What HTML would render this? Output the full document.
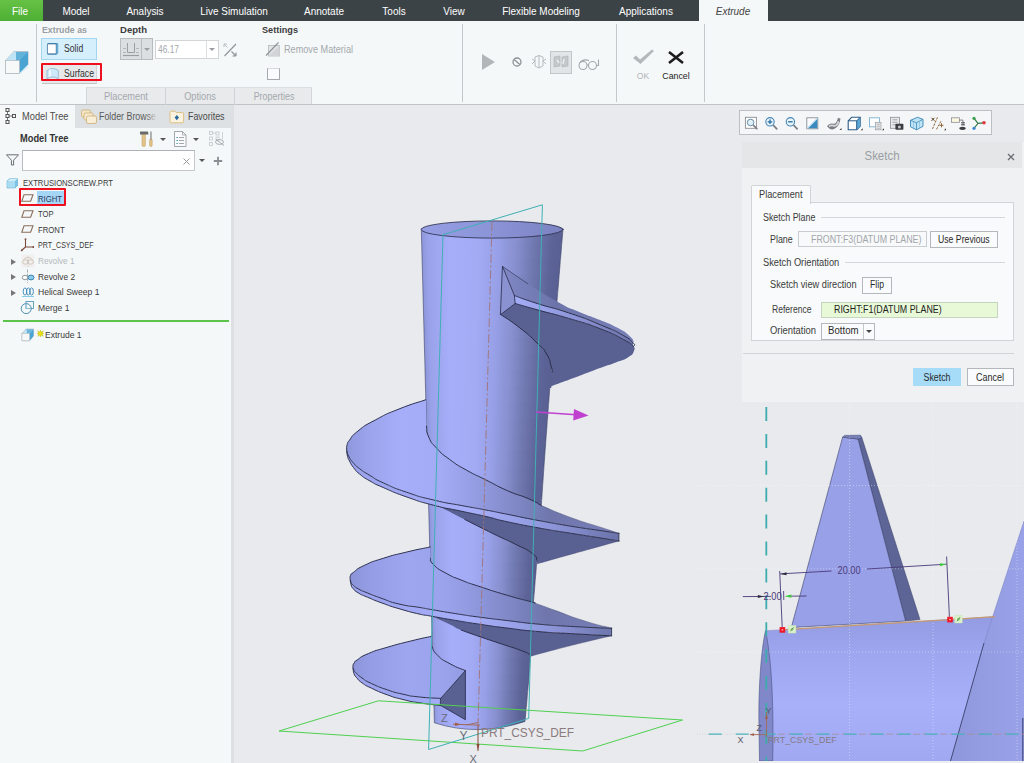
<!DOCTYPE html>
<html lang="en">
<head>
<meta charset="utf-8">
<title>Extrude - EXTRUSIONSCREW.PRT</title>
<style>
*{box-sizing:border-box;margin:0;padding:0}
html,body{width:1024px;height:763px;overflow:hidden;background:#e8eaee;font-family:"Liberation Sans",sans-serif;font-size:10px;color:#2b2b2b}
.abs{position:absolute}
#menubar{position:absolute;left:0;top:0;width:1024px;height:21px;background:#3c4346}
#menubar span{position:absolute;top:0;height:21px;line-height:22px;color:#fff;font-size:10.5px;white-space:nowrap;transform:translateX(-50%) scaleX(.95)}
#file{position:absolute;left:0;top:0;width:43px;height:21px;background:linear-gradient(#66c247,#4daf33);}
#extab{position:absolute;left:699px;top:0;width:69px;height:22px;background:#f5f8f9}
#ribbon{position:absolute;left:0;top:21px;width:1024px;height:84px;background:#f5f8f9;border-bottom:1px solid #c0c4c8}
.vsep{position:absolute;width:1px;background:#c4c8cb}
.lbl{position:absolute;white-space:nowrap;line-height:12px;transform:scaleX(.93);transform-origin:0 50%}
.lblc{position:absolute;white-space:nowrap;line-height:12px;transform:translateX(-50%) scaleX(.93)}
#below{display:none}
#left{position:absolute;left:0;top:105px;width:231px;height:658px;background:#fff}
#leftborder{position:absolute;left:231px;top:105px;width:2.7px;height:658px;background:#dce0e2}
#view{position:absolute;left:0;top:0;width:1024px;height:763px}
</style>
</head>
<body>
<!-- graphics area -->
<svg id="view" width="1024" height="763" viewBox="0 0 1024 763">
<defs>
  <linearGradient id="cyl" gradientUnits="userSpaceOnUse" x1="423" x2="560" y1="0" y2="0">
    <stop offset="0" stop-color="#8d95d8"/>
    <stop offset="0.06" stop-color="#99a1e8"/>
    <stop offset="0.22" stop-color="#a6aef9"/>
    <stop offset="0.42" stop-color="#a3abf5"/>
    <stop offset="0.60" stop-color="#949ce2"/>
    <stop offset="0.76" stop-color="#7a82bd"/>
    <stop offset="0.86" stop-color="#646c9f"/>
    <stop offset="1" stop-color="#596092"/>
  </linearGradient>
  <linearGradient id="cylb" x1="0" x2="1" y1="0" y2="0">
    <stop offset="0" stop-color="#8d95d8"/>
    <stop offset="0.05" stop-color="#9aa2ea"/>
    <stop offset="0.2" stop-color="#a6aefa"/>
    <stop offset="0.4" stop-color="#a3abf5"/>
    <stop offset="0.55" stop-color="#979fe6"/>
    <stop offset="0.67" stop-color="#8890d0"/>
    <stop offset="0.80" stop-color="#7078b0"/>
    <stop offset="0.92" stop-color="#5c6498"/>
    <stop offset="1" stop-color="#596092"/>
  </linearGradient>
  <linearGradient id="cap" gradientUnits="userSpaceOnUse" x1="421" x2="563" y1="0" y2="0">
    <stop offset="0" stop-color="#969ee4"/>
    <stop offset="0.5" stop-color="#8c94d8"/>
    <stop offset="1" stop-color="#7a82c0"/>
  </linearGradient>
  <linearGradient id="ftop" gradientUnits="userSpaceOnUse" x1="346" x2="620" y1="0" y2="0">
    <stop offset="0" stop-color="#8f97dc"/>
    <stop offset="0.08" stop-color="#9ba3ec"/>
    <stop offset="0.2" stop-color="#a6aefa"/>
    <stop offset="0.35" stop-color="#a3abf5"/>
    <stop offset="0.5" stop-color="#9199de"/>
    <stop offset="0.62" stop-color="#8088c6"/>
    <stop offset="0.75" stop-color="#6e76ac"/>
    <stop offset="1" stop-color="#7880b8"/>
  </linearGradient>
  <linearGradient id="ftop2" gradientUnits="userSpaceOnUse" x1="350" x2="612" y1="0" y2="0">
    <stop offset="0" stop-color="#8b93d8"/>
    <stop offset="0.08" stop-color="#959de6"/>
    <stop offset="0.22" stop-color="#9ea6f0"/>
    <stop offset="0.36" stop-color="#9ba3ec"/>
    <stop offset="0.5" stop-color="#8d95da"/>
    <stop offset="0.62" stop-color="#7e86c4"/>
    <stop offset="0.75" stop-color="#6e76ac"/>
    <stop offset="1" stop-color="#7880b8"/>
  </linearGradient>
  <linearGradient id="fedge" gradientUnits="userSpaceOnUse" x1="346" x2="620" y1="0" y2="0">
    <stop offset="0" stop-color="#9aa2ec"/>
    <stop offset="0.45" stop-color="#a7affa"/>
    <stop offset="0.75" stop-color="#8e96da"/>
    <stop offset="1" stop-color="#6a72a8"/>
  </linearGradient>
  <linearGradient id="f1top" gradientUnits="userSpaceOnUse" x1="502" x2="634" y1="0" y2="0">
    <stop offset="0" stop-color="#8088c6"/>
    <stop offset="0.4" stop-color="#6c74aa"/>
    <stop offset="1" stop-color="#7880b8"/>
  </linearGradient>
  <linearGradient id="f1edge" gradientUnits="userSpaceOnUse" x1="514" x2="634" y1="0" y2="0">
    <stop offset="0" stop-color="#a4acf6"/>
    <stop offset="0.5" stop-color="#8e96da"/>
    <stop offset="1" stop-color="#6a72a8"/>
  </linearGradient>
</defs>
<rect x="0" y="0" width="1024" height="763" fill="#e8eaee"/>

<g id="screw" stroke-linejoin="round" stroke-linecap="round">
<clipPath id="cylclip"><path d="M421.3,229 L434.4,722.8 Q478,737 525,721.5 L528.7,680 L530.3,656 L533.4,602.5 L536.6,564 L541.3,505.6 L544.4,460 L550,385 L563,229 Z"/></clipPath>
<g clip-path="url(#cylclip)">
<rect x="420.9" y="226.0" width="142.2" height="16.6" fill="url(#cylb)"/>
<rect x="421.4" y="242.0" width="140.4" height="16.6" fill="url(#cylb)"/>
<rect x="421.8" y="258.0" width="138.6" height="16.6" fill="url(#cylb)"/>
<rect x="422.2" y="274.0" width="136.9" height="16.6" fill="url(#cylb)"/>
<rect x="422.6" y="290.0" width="135.1" height="16.6" fill="url(#cylb)"/>
<rect x="423.1" y="306.0" width="133.4" height="16.6" fill="url(#cylb)"/>
<rect x="423.5" y="322.0" width="131.6" height="16.6" fill="url(#cylb)"/>
<rect x="423.9" y="338.0" width="129.8" height="16.6" fill="url(#cylb)"/>
<rect x="424.3" y="354.0" width="128.1" height="16.6" fill="url(#cylb)"/>
<rect x="424.8" y="370.0" width="126.3" height="16.6" fill="url(#cylb)"/>
<rect x="425.2" y="386.0" width="124.7" height="16.6" fill="url(#cylb)"/>
<rect x="425.6" y="402.0" width="123.0" height="16.6" fill="url(#cylb)"/>
<rect x="426.0" y="418.0" width="121.4" height="16.6" fill="url(#cylb)"/>
<rect x="426.5" y="434.0" width="119.8" height="16.6" fill="url(#cylb)"/>
<rect x="426.9" y="450.0" width="118.2" height="16.6" fill="url(#cylb)"/>
<rect x="427.3" y="466.0" width="116.6" height="16.6" fill="url(#cylb)"/>
<rect x="427.7" y="482.0" width="115.1" height="16.6" fill="url(#cylb)"/>
<rect x="428.1" y="498.0" width="113.6" height="16.6" fill="url(#cylb)"/>
<rect x="428.6" y="514.0" width="111.9" height="16.6" fill="url(#cylb)"/>
<rect x="429.0" y="530.0" width="110.2" height="16.6" fill="url(#cylb)"/>
<rect x="429.4" y="546.0" width="108.5" height="16.6" fill="url(#cylb)"/>
<rect x="429.8" y="562.0" width="106.8" height="16.6" fill="url(#cylb)"/>
<rect x="430.3" y="578.0" width="105.0" height="16.6" fill="url(#cylb)"/>
<rect x="430.7" y="594.0" width="103.2" height="16.6" fill="url(#cylb)"/>
<rect x="431.1" y="610.0" width="101.9" height="16.6" fill="url(#cylb)"/>
<rect x="431.5" y="626.0" width="100.5" height="16.6" fill="url(#cylb)"/>
<rect x="432.0" y="642.0" width="99.2" height="16.6" fill="url(#cylb)"/>
<rect x="432.4" y="658.0" width="97.7" height="16.6" fill="url(#cylb)"/>
<rect x="432.8" y="674.0" width="96.2" height="16.6" fill="url(#cylb)"/>
<rect x="433.2" y="690.0" width="94.4" height="16.6" fill="url(#cylb)"/>
<rect x="433.7" y="706.0" width="92.5" height="16.6" fill="url(#cylb)"/>
<rect x="434.1" y="722.0" width="90.9" height="16.6" fill="url(#cylb)"/>
</g>
<path d="M421.3,229 L434.4,722.8 Q478,737 525,721.5 L528.7,680 L530.3,656 L533.4,602.5 L536.6,564 L541.3,505.6 L544.4,460 L550,385 L563,229 Z" fill="none" stroke="#3a4068" stroke-width="0.6"/>
<ellipse cx="492.2" cy="229.5" rx="70.9" ry="8.6" fill="url(#cap)" stroke="#262a44" stroke-width="0.8"/>
<path d="M515.2,303.5 C522.5,305.6 519.4,304.8 537.2,309.8 C555.0,314.8 547.7,312.1 568.7,318.4 C589.7,324.7 581.8,321.6 600.1,328.7 C618.4,335.8 612.6,333.8 623.7,339.7 C634.8,345.6 630.2,344.1 633.5,346.3 L633.5,346.3 C633.7,347.8 635.7,347.1 634.0,350.7 C632.3,354.3 634.5,353.1 628.5,357.0 C622.5,360.9 625.4,358.8 615.9,362.5 C606.4,366.2 613.7,363.0 600.1,368.0 C586.5,373.0 591.7,371.3 575.0,377.5 C558.3,383.7 558.3,383.6 550.0,386.7 L552.5,372.0 C552.0,370.0 553.0,372.0 551.0,366.0 C549.0,360.0 551.3,361.7 546.6,354.0 C541.9,346.3 545.9,351.7 537.0,343.0 C528.1,334.3 532.1,337.5 520.0,328.0 C507.9,318.5 507.1,319.0 500.7,314.5 Z" fill="#596092" stroke="none"/>
<path d="M548.5,369 L553,371 L551.2,388 L548.5,388 Z" fill="#596092"/>
<path d="M502.6,266.5 C511.0,272.3 508.9,271.7 527.8,283.8 C546.7,295.9 542.4,293.5 559.2,302.7 C576.0,311.9 564.5,305.6 578.1,311.4 C591.7,317.2 587.5,314.8 600.1,320.0 C612.7,325.2 606.4,322.1 615.9,327.1 C625.4,332.1 622.5,330.0 628.5,335.0 C634.5,340.0 632.2,339.7 634.0,342.0 L632.4,342.8 C629.5,340.4 634.5,341.7 623.7,335.7 C612.9,329.7 618.4,332.3 600.1,324.7 C581.8,317.1 589.7,320.0 568.7,312.9 C547.7,305.8 555.3,309.3 537.2,303.5 C519.1,297.7 522.0,298.2 514.4,295.6 Z" fill="url(#f1top)" stroke="none"/>
<path d="M514.4,295.6 C522.0,298.2 519.1,297.7 537.2,303.5 C555.3,309.3 547.7,305.8 568.7,312.9 C589.7,320.0 581.8,317.1 600.1,324.7 C618.4,332.3 612.9,329.7 623.7,335.7 C634.5,341.7 629.5,340.4 632.4,342.8 L633.5,346.3 C630.2,344.1 634.8,345.6 623.7,339.7 C612.6,333.8 618.4,335.8 600.1,328.7 C581.8,321.6 589.7,324.7 568.7,318.4 C547.7,312.1 555.0,314.8 537.2,309.8 C519.4,304.8 522.5,305.6 515.2,303.5 Z" fill="url(#f1edge)" stroke="none"/>
<path d="M502.6,266.5 L514.4,295.6 L515.2,303.5 L500.7,314.5 Z" fill="#8a92d2" stroke="#262a44" stroke-width="0.8"/>
<path d="M514.4,295.6 C522.0,298.2 519.1,297.7 537.2,303.5 C555.3,309.3 547.7,305.8 568.7,312.9 C589.7,320.0 581.8,317.1 600.1,324.7 C618.4,332.3 612.9,329.7 623.7,335.7 C634.5,341.7 629.5,340.4 632.4,342.8" fill="none" stroke="#262a44" stroke-width="0.95"/>
<path d="M515.2,303.5 C522.5,305.6 519.4,304.8 537.2,309.8 C555.0,314.8 547.7,312.1 568.7,318.4 C589.7,324.7 581.8,321.6 600.1,328.7 C618.4,335.8 612.6,333.8 623.7,339.7 C634.8,345.6 630.2,344.1 633.5,346.3" fill="none" stroke="#262a44" stroke-width="0.95"/>
<path d="M500.7,314.5 C507.1,319.0 507.9,318.5 520.0,328.0 C532.1,337.5 528.1,334.3 537.0,343.0 C545.9,351.7 541.9,346.3 546.6,354.0 C551.3,361.7 549.0,360.0 551.0,366.0 C553.0,372.0 552.0,370.0 552.5,372.0" fill="none" stroke="#262a44" stroke-width="0.95"/>
<path d="M632.4,342.8 C633.1,343.4 634.2,343.3 634.6,344.5 C635.0,345.7 633.9,345.7 633.5,346.3" fill="none" stroke="#262a44" stroke-width="0.95"/>
<path d="M502.6,266.5 C511.0,272.3 519.4,278.0 527.8,283.8" fill="none" stroke="#262a44" stroke-width="0.6"/>
<path d="M437.7,505.8 C445.8,507.6 445.8,507.7 461.9,511.3 C478.0,514.9 470.8,513.0 486.0,516.5 C501.2,520.0 489.8,518.0 507.5,521.8 C525.2,525.6 518.0,524.2 539.0,528.0 C560.0,531.8 549.4,529.8 570.4,533.2 C591.4,536.6 585.7,535.6 601.9,538.2 C618.1,540.8 613.2,540.1 618.9,541.0 L618.9,541.0 C613.2,542.6 618.1,541.2 601.9,545.7 C585.7,550.2 592.0,548.4 570.4,554.4 C548.8,560.4 548.1,560.7 537.0,563.8 L536.8,560.2 C535.2,557.9 539.6,558.7 532.1,553.2 C524.6,547.7 525.2,549.2 514.4,543.7 C503.6,538.2 509.4,541.5 499.6,536.8 C489.8,532.1 496.5,535.4 484.9,529.6 C473.3,523.8 476.1,525.2 464.8,519.5 C453.5,513.8 460.0,517.1 451.0,512.5 C442.0,507.9 442.1,508.0 437.7,505.8 Z" fill="#596092" stroke="none"/>
<path d="M425.7,399.8 C416.8,402.9 415.8,402.3 399.0,409.0 C382.2,415.7 389.0,412.7 375.3,420.0 C361.6,427.3 366.6,424.2 358.0,431.0 C349.4,437.8 353.0,435.8 349.4,440.3 C345.8,444.8 348.1,441.6 347.2,444.5 C346.3,447.4 346.7,446.3 346.7,449.0 C346.7,451.7 346.6,450.2 347.2,452.5 C347.8,454.8 346.7,452.7 348.6,456.0 C350.5,459.3 349.3,458.3 353.0,462.5 C356.7,466.7 353.9,464.4 359.6,468.7 C365.3,473.0 362.1,470.8 370.0,475.5 C377.9,480.2 370.9,477.2 383.2,482.8 C395.5,488.4 390.0,486.6 406.8,492.3 C423.6,498.0 415.1,495.6 433.5,500.0 C451.9,504.4 444.4,502.3 461.9,505.6 C479.4,508.9 470.8,507.1 486.0,510.0 C501.2,512.9 489.8,510.8 507.5,514.3 C525.2,517.8 518.0,516.7 539.0,520.6 C560.0,524.5 549.4,522.7 570.4,526.1 C591.4,529.5 585.7,528.4 601.9,530.8 C618.1,533.2 613.2,532.5 618.9,533.4 L618.9,533.2 C613.2,531.4 618.1,533.0 601.9,527.7 C585.7,522.4 590.6,524.8 570.4,517.4 C550.2,510.0 551.0,509.5 541.3,505.6 L541.3,505.6 C536.9,503.2 539.3,503.5 528.0,498.5 C516.7,493.5 521.7,497.0 507.5,490.7 C493.3,484.4 499.1,486.5 485.5,479.7 C471.9,472.9 478.7,477.0 466.6,470.2 C454.5,463.4 459.3,466.5 449.3,459.2 C439.3,451.9 443.5,455.5 436.7,448.2 C429.9,440.9 432.2,444.5 428.8,437.2 C425.4,429.9 427.3,429.9 426.5,426.2 Z" fill="url(#ftop)" stroke="none"/>
<path d="M346.7,449.0 C346.9,450.2 346.6,450.2 347.2,452.5 C347.8,454.8 346.7,452.7 348.6,456.0 C350.5,459.3 349.3,458.3 353.0,462.5 C356.7,466.7 353.9,464.4 359.6,468.7 C365.3,473.0 362.1,470.8 370.0,475.5 C377.9,480.2 370.9,477.2 383.2,482.8 C395.5,488.4 390.0,486.6 406.8,492.3 C423.6,498.0 415.1,495.6 433.5,500.0 C451.9,504.4 444.4,502.3 461.9,505.6 C479.4,508.9 470.8,507.1 486.0,510.0 C501.2,512.9 489.8,510.8 507.5,514.3 C525.2,517.8 518.0,516.7 539.0,520.6 C560.0,524.5 549.4,522.7 570.4,526.1 C591.4,529.5 585.7,528.4 601.9,530.8 C618.1,533.2 613.2,532.5 618.9,533.4 L618.9,541.0 C613.2,540.1 618.1,540.8 601.9,538.2 C585.7,535.6 591.4,536.6 570.4,533.2 C549.4,529.8 560.0,531.8 539.0,528.0 C518.0,524.2 525.2,525.6 507.5,521.8 C489.8,518.0 501.2,520.0 486.0,516.5 C470.8,513.0 479.4,515.1 461.9,511.3 C444.4,507.5 451.9,510.0 433.5,505.2 C415.1,500.4 423.6,502.9 406.8,497.0 C390.0,491.1 395.5,492.8 383.2,487.5 C370.9,482.2 377.9,485.5 370.0,481.0 C362.1,476.5 365.1,478.5 359.6,474.0 C354.1,469.5 356.9,471.8 353.5,467.5 C350.1,463.2 351.5,464.7 349.5,461.0 C347.5,457.3 348.5,459.8 347.6,456.5 C346.7,453.2 347.1,452.8 346.8,451.0 Z" fill="url(#fedge)" stroke="none"/>
<path d="M425.7,399.8 C416.8,402.9 415.8,402.3 399.0,409.0 C382.2,415.7 389.0,412.7 375.3,420.0 C361.6,427.3 366.6,424.2 358.0,431.0 C349.4,437.8 353.0,435.8 349.4,440.3 C345.8,444.8 348.1,441.6 347.2,444.5 C346.3,447.4 346.7,446.3 346.7,449.0 C346.7,451.7 346.6,450.2 347.2,452.5 C347.8,454.8 346.7,452.7 348.6,456.0 C350.5,459.3 349.3,458.3 353.0,462.5 C356.7,466.7 353.9,464.4 359.6,468.7 C365.3,473.0 362.1,470.8 370.0,475.5 C377.9,480.2 370.9,477.2 383.2,482.8 C395.5,488.4 390.0,486.6 406.8,492.3 C423.6,498.0 415.1,495.6 433.5,500.0 C451.9,504.4 444.4,502.3 461.9,505.6 C479.4,508.9 470.8,507.1 486.0,510.0 C501.2,512.9 489.8,510.8 507.5,514.3 C525.2,517.8 518.0,516.7 539.0,520.6 C560.0,524.5 549.4,522.7 570.4,526.1 C591.4,529.5 585.7,528.4 601.9,530.8 C618.1,533.2 613.2,532.5 618.9,533.4" fill="none" stroke="#262a44" stroke-width="0.95"/>
<path d="M346.8,451.0 C347.1,452.8 346.7,453.2 347.6,456.5 C348.5,459.8 347.5,457.3 349.5,461.0 C351.5,464.7 350.1,463.2 353.5,467.5 C356.9,471.8 354.1,469.5 359.6,474.0 C365.1,478.5 362.1,476.5 370.0,481.0 C377.9,485.5 370.9,482.2 383.2,487.5 C395.5,492.8 390.0,491.1 406.8,497.0 C423.6,502.9 415.1,500.4 433.5,505.2 C451.9,510.0 444.4,507.5 461.9,511.3 C479.4,515.1 470.8,513.0 486.0,516.5 C501.2,520.0 489.8,518.0 507.5,521.8 C525.2,525.6 518.0,524.2 539.0,528.0 C560.0,531.8 549.4,529.8 570.4,533.2 C591.4,536.6 585.7,535.6 601.9,538.2 C618.1,540.8 613.2,540.1 618.9,541.0" fill="none" stroke="#262a44" stroke-width="0.95"/>
<path d="M426.5,426.2 C427.3,429.9 425.4,429.9 428.8,437.2 C432.2,444.5 429.9,440.9 436.7,448.2 C443.5,455.5 439.3,451.9 449.3,459.2 C459.3,466.5 454.5,463.4 466.6,470.2 C478.7,477.0 471.9,472.9 485.5,479.7 C499.1,486.5 493.3,484.4 507.5,490.7 C521.7,497.0 516.7,493.5 528.0,498.5 C539.3,503.5 536.9,503.2 541.3,505.6" fill="none" stroke="#262a44" stroke-width="0.95"/>
<path d="M464.8,519.5 C471.5,522.9 473.3,523.8 484.9,529.6 C496.5,535.4 489.8,532.1 499.6,536.8 C509.4,541.5 503.6,538.2 514.4,543.7 C525.2,549.2 524.6,547.7 532.1,553.2 C539.6,558.7 535.2,557.9 536.8,560.2" fill="none" stroke="#262a44" stroke-width="0.95"/>
<path d="M618.9,533.2 L618.9,541.0" fill="none" stroke="#262a44" stroke-width="0.8"/>
<path d="M541.3,505.6 C551.0,509.5 550.2,510.0 570.4,517.4 C590.6,524.8 585.7,522.4 601.9,527.7 C618.1,533.0 613.2,531.4 618.9,533.2" fill="none" stroke="#444a74" stroke-width="0.5"/>
<path d="M618.9,541.0 C613.2,542.6 618.1,541.2 601.9,545.7 C585.7,550.2 592.0,548.4 570.4,554.4 C548.8,560.4 548.1,560.7 537.0,563.8" fill="none" stroke="#444a74" stroke-width="0.5"/>
<path d="M433.0,616.8 C440.5,618.0 439.3,617.8 455.4,620.4 C471.5,623.0 464.0,621.9 481.4,624.5 C498.8,627.1 488.3,625.7 507.5,628.1 C526.7,630.5 518.0,629.8 539.0,631.6 C560.0,633.4 546.2,632.2 570.4,633.6 C594.6,635.0 597.9,635.1 611.6,635.8 L611.6,635.8 C603.1,637.8 605.0,637.2 586.0,641.8 C567.0,646.4 573.3,644.9 554.7,649.7 C536.1,654.5 538.4,654.1 530.3,656.3 L529.7,654.3 C526.6,652.9 529.3,653.5 520.3,650.2 C511.3,646.9 515.6,648.6 502.6,644.3 C489.6,640.0 495.2,641.9 481.4,637.2 C467.6,632.5 471.9,634.4 461.3,630.1 C450.7,625.8 458.9,628.6 449.5,624.2 C440.1,619.8 438.5,619.3 433.0,616.8 Z" fill="#596092" stroke="none"/>
<path d="M430.1,547.0 C422.3,548.7 422.4,548.2 406.8,552.0 C391.2,555.8 397.4,553.8 383.2,558.3 C369.0,562.8 374.3,560.7 364.3,565.4 C354.3,570.1 357.9,569.1 353.3,572.5 C348.7,575.9 351.6,573.5 350.6,575.6 C349.6,577.7 350.1,576.7 350.2,578.8 C350.3,580.9 350.0,579.9 350.8,581.8 C351.6,583.7 349.9,582.1 352.5,584.5 C355.1,586.9 353.5,586.2 358.5,589.0 C363.5,591.8 359.7,589.8 367.5,593.0 C375.3,596.2 371.5,594.8 382.0,598.5 C392.5,602.2 386.3,601.0 399.0,604.0 C411.7,607.0 409.5,605.7 420.0,607.5 C430.5,609.3 418.6,607.4 430.4,609.4 C442.2,611.4 438.4,610.9 455.4,613.6 C472.4,616.3 464.0,615.1 481.4,617.4 C498.8,619.7 488.3,618.3 507.5,620.6 C526.7,622.9 518.0,622.3 539.0,624.2 C560.0,626.1 546.2,625.0 570.4,626.4 C594.6,627.8 597.9,627.7 611.6,628.4 L611.6,628.0 C603.1,625.8 605.0,627.3 586.0,621.4 C567.0,615.5 572.2,616.6 554.7,610.3 C537.2,604.0 540.5,605.1 533.4,602.5 L533.4,602.5 C532.6,602.2 539.6,604.1 531.0,601.7 C522.4,599.3 525.3,600.7 507.5,595.4 C489.7,590.1 492.8,590.9 477.6,585.9 C462.4,580.9 472.4,584.5 461.9,580.3 C451.4,576.1 455.6,578.5 446.1,573.3 C436.6,568.1 438.7,569.6 433.5,564.6 C428.3,559.6 431.4,560.4 430.4,558.3 Z" fill="url(#ftop2)" stroke="none"/>
<path d="M350.2,578.8 C350.4,579.8 350.0,579.9 350.8,581.8 C351.6,583.7 349.9,582.1 352.5,584.5 C355.1,586.9 353.5,586.2 358.5,589.0 C363.5,591.8 359.7,589.8 367.5,593.0 C375.3,596.2 371.5,594.8 382.0,598.5 C392.5,602.2 386.3,601.0 399.0,604.0 C411.7,607.0 409.5,605.7 420.0,607.5 C430.5,609.3 418.6,607.4 430.4,609.4 C442.2,611.4 438.4,610.9 455.4,613.6 C472.4,616.3 464.0,615.1 481.4,617.4 C498.8,619.7 488.3,618.3 507.5,620.6 C526.7,622.9 518.0,622.3 539.0,624.2 C560.0,626.1 546.2,625.0 570.4,626.4 C594.6,627.8 597.9,627.7 611.6,628.4 L611.6,635.8 C597.9,635.1 594.6,635.0 570.4,633.6 C546.2,632.2 560.0,633.4 539.0,631.6 C518.0,629.8 526.7,630.5 507.5,628.1 C488.3,625.7 498.8,627.1 481.4,624.5 C464.0,621.9 472.4,623.2 455.4,620.4 C438.4,617.6 442.2,618.1 430.4,616.0 C418.6,613.9 430.5,616.6 420.0,614.2 C409.5,611.8 411.7,612.4 399.0,608.7 C386.3,605.0 392.5,606.8 382.0,603.0 C371.5,599.2 375.3,600.5 367.5,597.2 C359.7,593.9 363.3,595.9 358.5,593.0 C353.7,590.1 355.4,591.1 353.0,588.4 C350.6,585.7 352.1,587.6 351.2,585.0 C350.3,582.4 350.7,582.0 350.4,580.5 Z" fill="url(#fedge)" stroke="none"/>
<path d="M430.1,547.0 C422.3,548.7 422.4,548.2 406.8,552.0 C391.2,555.8 397.4,553.8 383.2,558.3 C369.0,562.8 374.3,560.7 364.3,565.4 C354.3,570.1 357.9,569.1 353.3,572.5 C348.7,575.9 351.6,573.5 350.6,575.6 C349.6,577.7 350.1,576.7 350.2,578.8 C350.3,580.9 350.0,579.9 350.8,581.8 C351.6,583.7 349.9,582.1 352.5,584.5 C355.1,586.9 353.5,586.2 358.5,589.0 C363.5,591.8 359.7,589.8 367.5,593.0 C375.3,596.2 371.5,594.8 382.0,598.5 C392.5,602.2 386.3,601.0 399.0,604.0 C411.7,607.0 409.5,605.7 420.0,607.5 C430.5,609.3 418.6,607.4 430.4,609.4 C442.2,611.4 438.4,610.9 455.4,613.6 C472.4,616.3 464.0,615.1 481.4,617.4 C498.8,619.7 488.3,618.3 507.5,620.6 C526.7,622.9 518.0,622.3 539.0,624.2 C560.0,626.1 546.2,625.0 570.4,626.4 C594.6,627.8 597.9,627.7 611.6,628.4" fill="none" stroke="#262a44" stroke-width="0.95"/>
<path d="M350.4,580.5 C350.7,582.0 350.3,582.4 351.2,585.0 C352.1,587.6 350.6,585.7 353.0,588.4 C355.4,591.1 353.7,590.1 358.5,593.0 C363.3,595.9 359.7,593.9 367.5,597.2 C375.3,600.5 371.5,599.2 382.0,603.0 C392.5,606.8 386.3,605.0 399.0,608.7 C411.7,612.4 409.5,611.8 420.0,614.2 C430.5,616.6 418.6,613.9 430.4,616.0 C442.2,618.1 438.4,617.6 455.4,620.4 C472.4,623.2 464.0,621.9 481.4,624.5 C498.8,627.1 488.3,625.7 507.5,628.1 C526.7,630.5 518.0,629.8 539.0,631.6 C560.0,633.4 546.2,632.2 570.4,633.6 C594.6,635.0 597.9,635.1 611.6,635.8" fill="none" stroke="#262a44" stroke-width="0.95"/>
<path d="M430.4,558.3 C431.4,560.4 428.3,559.6 433.5,564.6 C438.7,569.6 436.6,568.1 446.1,573.3 C455.6,578.5 451.4,576.1 461.9,580.3 C472.4,584.5 462.4,580.9 477.6,585.9 C492.8,590.9 489.7,590.1 507.5,595.4 C525.3,600.7 522.4,599.3 531.0,601.7 C539.6,604.1 532.6,602.2 533.4,602.5" fill="none" stroke="#262a44" stroke-width="0.95"/>
<path d="M461.3,630.1 C468.0,632.5 467.6,632.5 481.4,637.2 C495.2,641.9 489.6,640.0 502.6,644.3 C515.6,648.6 511.3,646.9 520.3,650.2 C529.3,653.5 526.6,652.9 529.7,654.3" fill="none" stroke="#262a44" stroke-width="0.95"/>
<path d="M611.6,628.0 L611.6,635.8" fill="none" stroke="#262a44" stroke-width="0.8"/>
<path d="M533.4,602.5 C540.5,605.1 537.2,604.0 554.7,610.3 C572.2,616.6 567.0,615.5 586.0,621.4 C605.0,627.3 603.1,625.8 611.6,628.0" fill="none" stroke="#444a74" stroke-width="0.5"/>
<path d="M611.6,635.8 C603.1,637.8 605.0,637.2 586.0,641.8 C567.0,646.4 573.3,644.9 554.7,649.7 C536.1,654.5 538.4,654.1 530.3,656.3" fill="none" stroke="#444a74" stroke-width="0.5"/>
<path d="M431.7,636.3 C424.7,637.9 425.6,637.3 410.8,641.0 C396.0,644.7 401.4,643.1 387.2,647.3 C373.0,651.5 378.3,649.4 368.3,653.6 C358.3,657.8 362.0,656.8 357.3,659.9 C352.6,663.0 355.6,660.9 354.2,663.0 C352.8,665.1 353.2,664.0 353.0,666.2 C352.8,668.4 352.7,667.4 353.6,669.5 C354.5,671.6 352.9,669.7 355.7,672.5 C358.5,675.3 356.7,674.3 362.0,678.0 C367.3,681.7 363.1,679.6 371.5,683.5 C379.9,687.4 376.7,686.2 387.2,689.8 C397.7,693.4 392.5,691.8 403.0,694.2 C413.5,696.6 406.1,695.5 418.7,696.9 C431.3,698.3 433.4,697.9 440.7,698.4 L465.4,670.6 C460.3,668.3 459.4,668.9 450.1,663.8 C440.8,658.7 443.5,661.0 437.5,655.2 C431.5,649.4 433.8,649.4 432.0,646.5 Z" fill="url(#ftop2)" stroke="none"/>
<path d="M353.0,666.2 C353.2,667.3 352.7,667.4 353.6,669.5 C354.5,671.6 352.9,669.7 355.7,672.5 C358.5,675.3 356.7,674.3 362.0,678.0 C367.3,681.7 363.1,679.6 371.5,683.5 C379.9,687.4 376.7,686.2 387.2,689.8 C397.7,693.4 392.5,691.8 403.0,694.2 C413.5,696.6 406.1,695.5 418.7,696.9 C431.3,698.3 433.4,697.9 440.7,698.4 L440.7,705.5 C433.4,704.6 431.3,704.7 418.7,702.7 C406.1,700.7 413.5,702.1 403.0,699.5 C392.5,696.9 397.7,698.6 387.2,694.8 C376.7,691.0 379.9,692.2 371.5,688.2 C363.1,684.2 367.0,686.4 362.0,682.8 C357.0,679.2 359.2,680.6 356.5,677.5 C353.8,674.4 355.1,676.5 354.0,673.5 C352.9,670.5 353.4,670.2 353.1,668.5 Z" fill="url(#fedge)" stroke="none"/>
<path d="M440.7,698.4 L465.4,670.6 L465.4,719.7 L440.7,705.5 Z" fill="#596092" stroke="#262a44" stroke-width="0.8"/>
<path d="M431.7,636.3 C424.7,637.9 425.6,637.3 410.8,641.0 C396.0,644.7 401.4,643.1 387.2,647.3 C373.0,651.5 378.3,649.4 368.3,653.6 C358.3,657.8 362.0,656.8 357.3,659.9 C352.6,663.0 355.6,660.9 354.2,663.0 C352.8,665.1 353.2,664.0 353.0,666.2 C352.8,668.4 352.7,667.4 353.6,669.5 C354.5,671.6 352.9,669.7 355.7,672.5 C358.5,675.3 356.7,674.3 362.0,678.0 C367.3,681.7 363.1,679.6 371.5,683.5 C379.9,687.4 376.7,686.2 387.2,689.8 C397.7,693.4 392.5,691.8 403.0,694.2 C413.5,696.6 406.1,695.5 418.7,696.9 C431.3,698.3 433.4,697.9 440.7,698.4" fill="none" stroke="#262a44" stroke-width="0.95"/>
<path d="M353.1,668.5 C353.4,670.2 352.9,670.5 354.0,673.5 C355.1,676.5 353.8,674.4 356.5,677.5 C359.2,680.6 357.0,679.2 362.0,682.8 C367.0,686.4 363.1,684.2 371.5,688.2 C379.9,692.2 376.7,691.0 387.2,694.8 C397.7,698.6 392.5,696.9 403.0,699.5 C413.5,702.1 406.1,700.7 418.7,702.7 C431.3,704.7 433.4,704.6 440.7,705.5" fill="none" stroke="#262a44" stroke-width="0.95"/>
<path d="M432.0,646.5 C433.8,649.4 431.5,649.4 437.5,655.2 C443.5,661.0 440.8,658.7 450.1,663.8 C459.4,668.9 460.3,668.3 465.4,670.6" fill="none" stroke="#262a44" stroke-width="0.95"/>
</g>
<g fill="none">
<path d="M378.5,700.8 L682.5,720 L582.7,751 L279,731 Z" stroke="#4fd04f" stroke-width="1"/>
<path d="M443,234.7 L542.4,204.8 L528.7,718.4 L428.6,749.5 Z" stroke="#3fb0b4" stroke-width="1"/>
<path d="M492,222 L478,726" stroke="#a07474" stroke-width="0.9" stroke-dasharray="9 2.5 2 2.5"/>
<path d="M478,725.5 L478,751" stroke="#8c5a4a" stroke-width="1.1"/>
<path d="M453,724.2 L480,725.2" stroke="#a06a5a" stroke-width="1"/>
<path d="M466,725 L478,722.5" stroke="#a06a5a" stroke-width="0.9"/>
</g>
<path d="M455,722.6 L461,724.4 L455,726 Z" fill="#a0604a"/>
<path d="M476.4,744 L478,750 L479.6,744 Z" fill="#8c4a3a"/>
<g font-family="Liberation Sans, sans-serif" fill="#6a6a78">
<text x="441" y="721.5" font-size="11">Z</text>
<text x="459.5" y="739.5" font-size="12">Y</text>
<text x="469.5" y="762.5" font-size="11">X</text>
<text x="481" y="737" font-size="12" fill="#8c7a7c" textLength="93" lengthAdjust="spacingAndGlyphs">PRT_CSYS_DEF</text>
</g>
<path d="M536,412 L576,414.8" stroke="#c040d0" stroke-width="1.6" fill="none"/>
<path d="M574,409 L588.5,415.6 L573.2,420.6 Z" fill="#c040d0"/>
<defs>
  <linearGradient id="rbody" gradientUnits="userSpaceOnUse" x1="0" x2="0" y1="617" y2="763">
    <stop offset="0" stop-color="#939be2"/>
    <stop offset="0.25" stop-color="#9ea6f0"/>
    <stop offset="0.6" stop-color="#a8b0fa"/>
    <stop offset="1" stop-color="#a0a8f2"/>
  </linearGradient>
  <linearGradient id="rfl" gradientUnits="userSpaceOnUse" x1="950" x2="1024" y1="0" y2="0">
    <stop offset="0" stop-color="#8f97dc"/>
    <stop offset="1" stop-color="#99a1e8"/>
  </linearGradient>
</defs>
<g id="rview" stroke-linejoin="round">
<path d="M860.4,435.7 L862,438 L920,619.6 L905.6,621 L858,439 Z" fill="#5d6596" stroke="#3a4068" stroke-width="0.5"/>
<path d="M842.6,437.2 L858,439 L905.6,621 L791.3,627.5 Z" fill="#98a0e8" stroke="#3a4068" stroke-width="0.6"/>
<path d="M842.6,437.2 L844.5,435.4 L860.4,435.2 L862,438 L858,439 Z" fill="#7880bc" stroke="#3a4068" stroke-width="0.5"/>
<path d="M765.5,630.7 L992.4,616.8 L1024,614.5 L1024,761 L765.5,761 Z" fill="url(#rbody)"/>
<path d="M1024,521 L992.4,617.5 L984,643 L950.5,761 L1024,761 Z" fill="url(#rfl)"/>
<path d="M984,643 L950.5,761" stroke="#3a4068" stroke-width="0.9" fill="none"/>
<path d="M1024,521 L992.4,617.5 L984,643" stroke="#8088c8" stroke-width="0.6" fill="none"/>
<path d="M1022.8,718 L1022.8,761" stroke="#3a4068" stroke-width="1" fill="none"/>
<path d="M765.5,630.7 C761,650 758.5,690 758.9,720 L759.5,761 L772.7,761 C773.5,720 773,665 765.5,630.7 Z" fill="#8088ca" stroke="#4a5080" stroke-width="0.6"/>
<path d="M765.5,630.7 L992.4,616.8" stroke="#8a8fc0" stroke-width="0.5" fill="none"/>
<path d="M849.5,404 L849.5,761" stroke="#ffffff" stroke-opacity="0.38" stroke-width="1" stroke-dasharray="1 2" fill="none"/>
<path d="M933.0,404 L933.0,761" stroke="#ffffff" stroke-opacity="0.38" stroke-width="1" stroke-dasharray="1 2" fill="none"/>
<path d="M1017.0,404 L1017.0,761" stroke="#ffffff" stroke-opacity="0.38" stroke-width="1" stroke-dasharray="1 2" fill="none"/>
<path d="M697,485.5 L1024,485.5" stroke="#ffffff" stroke-opacity="0.38" stroke-width="1" stroke-dasharray="1 2" fill="none"/>
<path d="M697,568.8 L1024,568.8" stroke="#ffffff" stroke-opacity="0.38" stroke-width="1" stroke-dasharray="1 2" fill="none"/>
<path d="M697,652.0 L1024,652.0" stroke="#ffffff" stroke-opacity="0.38" stroke-width="1" stroke-dasharray="1 2" fill="none"/>
<path d="M782.4,629.9 L950,619.6 L995,616.6" stroke="#c89a72" stroke-width="1.1" fill="none"/>
<path d="M766.3,407 L766.3,761" stroke="#3eacac" stroke-width="1.8" stroke-dasharray="14 12.9" fill="none"/>
<path d="M708.7,734.2 L1024,734.2" stroke="#4ab0b8" stroke-width="1.2" stroke-dasharray="13 14" fill="none"/>
<path d="M775,734.2 L1024,734.2" stroke="#a8909c" stroke-width="1" stroke-dasharray="7 3 2 15" stroke-dashoffset="-3" fill="none" opacity="0.8"/>
<path d="M697,734.2 L708,734.2 M722,734.2 L735,734.2" stroke="#d0d4d8" stroke-width="1" stroke-dasharray="1 1.5" fill="none"/>
<path d="M766.5,712 L766.5,737" stroke="#a06a5a" stroke-width="0.9" fill="none"/>
<path d="M750,734.6 L767,734.6" stroke="#a06a5a" stroke-width="0.9" fill="none"/>
<path d="M765,719 L766.5,714 L768,719 Z" fill="#a0604a"/>
<path d="M754,733.3 L749.5,734.6 L754,735.9 Z" fill="#a0604a"/>
<g font-family="Liberation Sans, sans-serif" fill="#5a5a66">
<text x="765.5" y="713.5" font-size="9">Y</text>
<text x="756.5" y="731" font-size="9">Z</text>
<text x="737.5" y="743" font-size="9">X</text>
<text x="767.7" y="743" font-size="9" fill="#847a80" textLength="69" lengthAdjust="spacingAndGlyphs">PRT_CSYS_DEF</text>
</g>
<g stroke="#4a3a78" stroke-width="0.9" fill="none">
<path d="M779.7,571 L782.2,627"/>
<path d="M946.6,556.5 L949.4,616.8"/>
<path d="M780.2,573.9 L831.5,571"/>
<path d="M867,569 L946.6,564.2"/>
<path d="M742.8,596.6 L771,596.4"/>
<path d="M788,596.2 L806.6,596"/>
<path d="M783.6,591 L783.8,600"/>
</g>
<path d="M780.4,573.9 L786.5,572.2 L786.6,575.2 Z" fill="#30283c"/>
<path d="M946.4,564.2 L939.8,563.2 L940,566.2 Z" fill="#3cc83c"/>
<path d="M764,596.5 L757.8,595 L757.8,598 Z" fill="#30283c"/>
<path d="M784.4,596.2 L791.4,594.6 L791.4,597.8 Z" fill="#3cc83c"/>
<g font-family="Liberation Sans, sans-serif" fill="#4a3a78" font-size="10.5">
<text x="837.6" y="574.2" textLength="23" lengthAdjust="spacingAndGlyphs">20.00</text>
<text x="763.6" y="600.2" textLength="18" lengthAdjust="spacingAndGlyphs">2.00</text>
</g>
<rect x="779.6" y="627.1" width="5.6" height="5.6" fill="#f01828"/>
<rect x="781.6" y="629.2" width="1.6" height="1.4" fill="#ffb0b0"/>
<rect x="947.2" y="616.8" width="5.6" height="5.6" fill="#f01828"/>
<rect x="949.2" y="618.9" width="1.6" height="1.4" fill="#ffb0b0"/>
<rect x="788.3" y="625.5" width="7.6" height="7.6" fill="#dcf2cc" stroke="#c2e0b0" stroke-width="0.4"/>
<path d="M790.5,631.3 L793.7,627.3" stroke="#4a8a3a" stroke-width="0.9" fill="none"/>
<circle cx="792.1" cy="629.3" r="1" fill="none" stroke="#4a8a3a" stroke-width="0.5"/>
<rect x="954.7" y="615.4" width="7.6" height="7.6" fill="#dcf2cc" stroke="#c2e0b0" stroke-width="0.4"/>
<path d="M956.9,621.2 L960.1,617.2" stroke="#4a8a3a" stroke-width="0.9" fill="none"/>
<circle cx="958.5" cy="619.2" r="1" fill="none" stroke="#4a8a3a" stroke-width="0.5"/>
</g>
<rect x="758" y="761" width="266" height="2" fill="#eceef1"/>
</svg>

<div id="menubar">
  <div id="file"></div>
  <span style="left:20px">File</span>
  <span style="left:76px">Model</span>
  <span style="left:145px">Analysis</span>
  <span style="left:234px">Live Simulation</span>
  <span style="left:324px">Annotate</span>
  <span style="left:394px">Tools</span>
  <span style="left:454px">View</span>
  <span style="left:541px">Flexible Modeling</span>
  <span style="left:646px">Applications</span>
  <div id="extab"></div>
  <span style="left:733px;color:#444;font-style:italic">Extrude</span>
</div>

<div id="ribbon">
<style>
#ribbon .g{color:#a4a8ac}
#ribbon .b{font-weight:bold;color:#3c3c3c}
.tabtxt{position:absolute;top:0;height:17px;line-height:18px;color:#a4a8ac;font-size:10px;transform:translateX(-50%) scaleX(.93);white-space:nowrap}
</style>
<!-- positions inside ribbon are relative to ribbon top (y=21) -->
<div class="vsep" style="left:36px;top:3px;height:78px"></div>
<div class="vsep" style="left:462px;top:3px;height:78px"></div>
<div class="vsep" style="left:616px;top:3px;height:78px"></div>
<div class="vsep" style="left:704px;top:3px;height:78px"></div>

<!-- extrude icon -->
<svg class="abs" style="left:3px;top:27px" width="28" height="28" viewBox="0 0 28 28">
  <path d="M2.5,12.5 L11,3.5 L25,3.5 L25,16.5 L16.5,25.5 L2.5,25.5 Z" fill="#c6e6f6" stroke="#9aa6ae" stroke-width="0.6"/>
  <path d="M12,4 L25,4 L25,16.5 L16.5,25 L16.5,12.5 L11.5,12.5 Z" fill="#62b2da"/>
  <path d="M16.5,12.5 L25,4 L25,16.5 L16.5,25 Z" fill="#4aa4d2"/>
  <path d="M2.5,12.5 L11,3.8 L13,3.8 L13,12.5 Z" fill="#bfe4f6"/>
  <rect x="2.5" y="12.5" width="14" height="13" fill="#f7f8f8" stroke="#a8b0b6" stroke-width="0.6"/>
  <path d="M16.5,25.3 L25,16.5 L25,19 L18,25.5 Z" fill="#d4ecf8"/>
</svg>

<div class="lbl" style="transform:scaleX(0.926);left:42px;top:3px;font-size:9.5px;font-weight:bold;color:#9a9ea2">Extrude as</div>
<div class="lbl b" style="transform:scaleX(1.003);left:120px;top:3px;font-size:9.5px">Depth</div>
<div class="lbl b" style="transform:scaleX(0.960);left:262px;top:3px;font-size:9.5px">Settings</div>

<!-- Solid -->
<div class="abs" style="left:41px;top:17px;width:56px;height:22px;background:#d6effc;border:1px solid #a3d7f1"></div>
<svg class="abs" style="left:45px;top:21px" width="15" height="14" viewBox="0 0 15 14">
  <path d="M2,2.5 Q2,1 3.5,1 L12,1 L13.2,2 L13.2,11 L11.5,12.8 L3.5,12.8 Q2,12.8 2,11.3 Z" fill="#4a8cba"/>
  <path d="M11,2.2 L13,2.2 L13,11 L11,12.5 Z" fill="#62aeda"/>
  <rect x="2.4" y="2" width="8.8" height="9.8" rx="0.8" fill="#fff" stroke="#34628e" stroke-width="0.6"/>
</svg>
<div class="lbl" style="transform:scaleX(0.867);left:63.5px;top:22px;font-size:10px;color:#333">Solid</div>

<!-- Surface -->
<div class="abs" style="left:42px;top:43px;width:55px;height:20px;background:#e6e8ea;border-bottom:1px solid #c2c5c8;border-right:1px solid #d2d5d8"></div>
<svg class="abs" style="left:45px;top:46px" width="15" height="13" viewBox="0 0 15 13">
  <path d="M2,3.5 Q7.5,-0.5 13.3,3.5 L13.3,11.8 Q7.5,8 2,11.8 Z" fill="#cfeaf9" stroke="#8ab4cc" stroke-width="0.8"/>
  <path d="M5,2.3 L5,9.8" stroke="#ffffff" stroke-width="1.6" opacity="0.8"/>
</svg>
<div class="lbl" style="transform:scaleX(0.870);left:63.5px;top:46.5px;font-size:10px;color:#333">Surface</div>
<div class="abs" style="left:41px;top:41.5px;width:60.5px;height:18.5px;border:2px solid #f00f1e;border-radius:1px"></div>

<!-- Depth controls -->
<div class="abs" style="left:120px;top:17px;width:32.5px;height:22px;background:#dcdfe1;border:1px solid #b9bcbf"></div>
<div class="abs" style="left:141px;top:18px;width:1px;height:20px;background:#b9bcbf"></div>
<svg class="abs" style="left:121px;top:18px" width="20" height="20" viewBox="0 0 20 20">
  <g stroke="#9a9ea2" fill="none" stroke-width="1">
    <path d="M6.5,4 L6.5,13.5 L13.5,13.5 L13.5,4"/>
    <path d="M2,16.5 L18,16.5" stroke-width="1.2"/>
    <path d="M2,9.5 L5,9.5 M15,9.5 L18,9.5 M2,13.5 L5,13.5 M15,13.5 L18,13.5" stroke="#b4b8bb"/>
  </g>
</svg>
<div class="abs" style="left:144px;top:27px;width:0;height:0;border-left:3px solid transparent;border-right:3px solid transparent;border-top:3.5px solid #9a9ea2"></div>
<div class="abs" style="left:155px;top:18.5px;width:63.5px;height:19px;background:#fff;border:1px solid #d2d5d8"></div>
<div class="abs" style="left:205.5px;top:19.5px;width:1px;height:17px;background:#dcdfe2"></div>
<div class="lbl g" style="transform:scaleX(0.839);left:158px;top:22.5px;font-size:10px">46.17</div>
<div class="abs" style="left:209px;top:27px;width:0;height:0;border-left:3px solid transparent;border-right:3px solid transparent;border-top:3.5px solid #9a9ea2"></div>
<svg class="abs" style="left:222px;top:21px" width="16" height="16" viewBox="0 0 16 16">
  <g stroke="#8e9296" fill="none" stroke-width="1.1">
    <path d="M2.5,14 L14,2"/>
    <path d="M9.5,9.5 L14,14 M14,14 L14,10.5 M14,14 L10.5,14"/>
  </g>
  <path d="M2,2 L5,2 M2,2 L2,5 M2,2 L5.5,5.5" stroke="#b4b8bb" stroke-width="0.9" fill="none"/>
</svg>

<!-- Settings -->
<svg class="abs" style="left:265px;top:20px" width="17" height="17" viewBox="0 0 17 17">
  <rect x="3.5" y="4.5" width="11" height="10.5" fill="#e2e4e6" stroke="#b4b8bb" stroke-width="0.8"/>
  <path d="M3.5,15 L14.5,4.5 L14.5,15 Z" fill="#d2d5d8"/>
  <path d="M1,14.5 L13.5,1.5" stroke="#8e9296" stroke-width="1.1"/>
</svg>
<div class="lbl g" style="transform:scaleX(0.913);left:284px;top:22.5px;font-size:10px">Remove Material</div>
<div class="abs" style="left:267px;top:47px;width:12.5px;height:12px;border:1px solid #a6aaad;border-top-color:#d6d9dc;background:#fafbfc"></div>

<!-- tabs -->
<div class="abs" style="left:85.5px;top:66px;width:226px;height:17px;background:#e8eaec;border-left:1px solid #d4d7da;border-top:1px solid #dcdfe2;border-right:1px solid #d4d7da">
  <div class="tabtxt c" style="transform:translateX(-50%) scaleX(0.926);left:39.5px;">Placement</div>
  <div class="tabtxt c" style="transform:translateX(-50%) scaleX(0.921);left:113.5px;">Options</div>
  <div class="tabtxt c" style="transform:translateX(-50%) scaleX(0.893);left:187px;">Properties</div>
  <div class="abs" style="left:78px;top:0;width:1px;height:17px;background:#d0d3d6"></div>
  <div class="abs" style="left:147px;top:0;width:1px;height:17px;background:#d0d3d6"></div>
</div>

<!-- run controls -->
<div class="abs" style="left:482px;top:32.5px;width:0;height:0;border-top:8.5px solid transparent;border-bottom:8.5px solid transparent;border-left:13px solid #b2b6b9"></div>
<svg class="abs" style="left:511px;top:35px" width="12" height="12" viewBox="0 0 12 12"><circle cx="6" cy="6" r="4" fill="none" stroke="#8e9296" stroke-width="1.3"/><path d="M3.2,3.4 L8.8,8.6" stroke="#8e9296" stroke-width="1.3"/></svg>
<svg class="abs" style="left:530px;top:33px" width="18" height="16" viewBox="0 0 18 16">
  <g stroke="#b0b4b8" fill="none" stroke-width="0.9">
    <path d="M5,3 L9,1.5 L13,3 L13,12 L9,14 L5,12 Z"/><path d="M9,1.5 L9,14 M2,5 L5,7 L2,10 M16,5 L13,7 L16,10"/>
  </g>
</svg>
<div class="abs" style="left:550px;top:30px;width:21.5px;height:22.5px;background:#e2e5e7;border:1px solid #c2c6c9"></div>
<svg class="abs" style="left:552px;top:33px" width="18" height="16" viewBox="0 0 18 16">
  <path d="M2,3 L8,2 L8,12 L2,13 Z M10,3 L16,2 L16,12 L10,13 Z" fill="#c4c8cb" stroke="#b0b4b8" stroke-width="0.6"/>
  <path d="M5,6 L7,9 M12,5 L11,10" stroke="#eceef0" stroke-width="1.4"/>
</svg>
<svg class="abs" style="left:577px;top:36px" width="24" height="14" viewBox="0 0 24 14">
  <g stroke="#a4a8ac" fill="none" stroke-width="1.1">
    <circle cx="6" cy="8.5" r="4"/><circle cx="15.5" cy="8.5" r="4"/>
    <path d="M2.5,6 Q6,1.5 12,3.5 M10,8 L11.5,8 M19.5,8.5 L21.5,8.5 L21.5,2.5"/>
  </g>
</svg>

<!-- OK / Cancel -->
<svg class="abs" style="left:631px;top:27px" width="25" height="18" viewBox="0 0 25 18">
  <path d="M2,10 L5,7.5 L9,11.5 L21,1.5 L23,3 L9.5,16 Z" fill="#b4b8bb"/>
</svg>
<div class="lblc c" style="transform:translateX(-50%) scaleX(0.910);left:643px;top:49px;font-size:9.5px;color:#b0b4b8">OK</div>
<svg class="abs" style="left:667px;top:29px" width="18" height="15" viewBox="0 0 18 15">
  <path d="M2,2 L16,13 M16,2 L2,13" stroke="#1c1c1c" stroke-width="2.6" fill="none"/>
</svg>
<div class="lblc c" style="transform:translateX(-50%) scaleX(0.930);left:676px;top:49px;font-size:9.5px;color:#222">Cancel</div>

</div>
<div id="below"></div>

<div id="left">
<style>
#left{background:#f5f8f9}
#left .t{position:absolute;white-space:nowrap;line-height:12px;font-size:9.5px;color:#3a3a3a;transform-origin:0 50%}
#left .ar{position:absolute;width:0;height:0;border-top:3px solid transparent;border-bottom:3px solid transparent;border-left:5px solid #777}
#left .dd{position:absolute;width:0;height:0;border-left:3px solid transparent;border-right:3px solid transparent;border-top:3.5px solid #555}
</style>
<!-- coordinates relative to #left (top = 105) -->
<div class="abs" style="left:75px;top:0;width:156px;height:23px;background:#dde1e3"></div>
<!-- model tree tab icon -->
<svg class="abs" style="left:4px;top:2px" width="14" height="18" viewBox="0 0 14 18">
  <g fill="#f5f8f9" stroke="#555" stroke-width="1">
    <rect x="2" y="1.5" width="3" height="3"/><rect x="2" y="7.5" width="3" height="3"/><rect x="2" y="13.5" width="3" height="3"/><rect x="8.5" y="7.5" width="3" height="3"/>
  </g>
  <path d="M3.5,4.5 L3.5,7.5 M3.5,10.5 L3.5,13.5 M5,9 L8.5,9" stroke="#555" stroke-width="0.8"/>
</svg>
<div class="t" style="transform:scaleX(0.929);left:21.5px;top:5.5px;font-size:10px;color:#4a4a4a">Model Tree</div>
<!-- folder browser tab -->
<svg class="abs" style="left:80px;top:3px" width="18" height="17" viewBox="0 0 18 17">
  <g stroke="#c8a868" stroke-width="0.7">
    <rect x="1.5" y="2" width="9" height="7" rx="1.5" fill="#f4e6c4"/>
    <rect x="4" y="5" width="9" height="7" rx="1.5" fill="#f6ead0"/>
    <rect x="6.5" y="8" width="10" height="7.5" rx="1.5" fill="#f8eed8"/>
  </g>
</svg>
<div class="t" style="transform:scaleX(0.884);left:99px;top:5.5px;font-size:10px;color:#5a5a5a">Folder Browse</div>
<div class="abs" style="left:146px;top:2px;width:14px;height:19px;background:linear-gradient(90deg,rgba(221,225,227,0),#dde1e3 80%)"></div>
<!-- favorites tab -->
<svg class="abs" style="left:169px;top:5px" width="16" height="14" viewBox="0 0 16 14">
  <path d="M1,2.5 Q1,1.2 2.2,1.2 L6,1.2 L7.2,2.6 L13.5,2.6 Q14.6,2.6 14.6,3.8 L14.6,11.5 Q14.6,12.8 13.4,12.8 L2.2,12.8 Q1,12.8 1,11.5 Z" fill="#fbf3df" stroke="#d8b46a" stroke-width="0.8"/>
  <path d="M7.8,5 L10,7.6 L7.8,10.2 L5.6,7.6 Z" fill="#2a6a9a"/>
</svg>
<div class="t" style="transform:scaleX(0.888);left:188px;top:5.5px;font-size:10px;color:#4a4a4a">Favorites</div>

<!-- heading + toolbar -->
<div class="t" style="transform:scaleX(0.928);left:19.5px;top:28px;font-size:10px;font-weight:bold;color:#333">Model Tree</div>
<svg class="abs" style="left:139px;top:25px" width="16" height="18" viewBox="0 0 16 18">
  <rect x="3" y="3" width="3.4" height="13.5" rx="1.5" fill="#e2c48a" stroke="#b8965a" stroke-width="0.5"/>
  <path d="M1,1.5 L9,1.5 L9.5,4.5 L1,4.5 Z" fill="#6a6a6a"/>
  <rect x="10.6" y="9" width="2.6" height="7.5" rx="1.2" fill="#e2c48a" stroke="#b8965a" stroke-width="0.5"/>
  <rect x="11.4" y="1.5" width="1.1" height="8" fill="#777"/>
</svg>
<div class="dd" style="left:160px;top:32.5px"></div>
<svg class="abs" style="left:173px;top:25px" width="15" height="18" viewBox="0 0 15 18">
  <path d="M1.5,1.5 L9.5,1.5 L13,5 L13,16.5 L1.5,16.5 Z" fill="#fafbfc" stroke="#8e9296" stroke-width="0.8"/>
  <path d="M9.5,1.5 L9.5,5 L13,5" fill="none" stroke="#8e9296" stroke-width="0.7"/>
  <path d="M6,7.5 L11,7.5 M6,10.5 L11,10.5 M6,13.5 L11,13.5" stroke="#8e9296" stroke-width="0.8"/>
  <path d="M3.5,7.5 L4.8,7.5 M3.5,10.5 L4.8,10.5 M3.5,13.5 L4.8,13.5" stroke="#3a8a9a" stroke-width="1.1"/>
</svg>
<div class="dd" style="left:193px;top:32.5px"></div>
<svg class="abs" style="left:208px;top:25px" width="18" height="18" viewBox="0 0 18 18">
  <g fill="none" stroke="#c4c8cb" stroke-width="0.8">
    <rect x="1.5" y="1.5" width="3" height="3"/><rect x="1.5" y="7" width="3" height="3"/><rect x="1.5" y="12.5" width="3" height="3"/>
    <rect x="8" y="2" width="3" height="3"/><rect x="8" y="7" width="3" height="3"/>
    <path d="M4.5,3 L8,3 M14.5,2 L14.5,9"/>
  </g>
  <ellipse cx="11.5" cy="12" rx="4" ry="2.4" fill="none" stroke="#a0a4a8" stroke-width="0.9"/>
  <path d="M8,9.5 L16,15.5" stroke="#a0a4a8" stroke-width="0.9"/>
</svg>

<!-- filter row -->
<svg class="abs" style="left:5px;top:48px" width="15" height="14" viewBox="0 0 15 14">
  <path d="M1.5,1.8 L13.5,1.8 L8.6,7.2 L8.6,12 L6.4,12 L6.4,7.2 Z" fill="none" stroke="#6a6e72" stroke-width="1"/>
</svg>
<div class="abs" style="left:22px;top:45px;width:172.5px;height:21px;background:#fff;border:1px solid #c4c8cb;border-top-color:#aeb2b6;border-left-color:#b8bcc0"></div>
<svg class="abs" style="left:182px;top:51.5px" width="9" height="9" viewBox="0 0 9 9"><path d="M1.5,1.5 L7.5,7.5 M7.5,1.5 L1.5,7.5" stroke="#8e9296" stroke-width="0.9"/></svg>
<div class="dd" style="left:198.5px;top:54px"></div>
<svg class="abs" style="left:213px;top:51px" width="10" height="10" viewBox="0 0 10 10"><path d="M5,0.8 L5,9.2 M0.8,5 L9.2,5" stroke="#8a8e92" stroke-width="1.8"/></svg>

<!-- tree -->
<svg class="abs" style="left:5.5px;top:72.5px" width="13" height="11" viewBox="0 0 13 11">
  <path d="M1,3 L3.5,0.8 L11.5,0.8 L11.5,7.5 L9,10 L1,10 Z" fill="#7cc4e4" stroke="#4a9ac4" stroke-width="0.5"/>
  <rect x="1.2" y="3" width="7.8" height="6.8" rx="0.8" fill="#aadcf2"/>
  <path d="M1.5,3 L3.8,1.1 L11.2,1.1 L9,3 Z" fill="#d2eef9"/>
</svg>
<div class="t" style="transform:scaleX(0.805);left:22.5px;top:72px">EXTRUSIONSCREW.PRT</div>

<div class="abs" style="left:37px;top:85.5px;width:27px;height:13px;background:#a6d6f6"></div>
<svg class="abs" style="left:21px;top:89px" width="13" height="8" viewBox="0 0 13 8"><path d="M3,0.8 L12,0.8 L9.6,7.2 L0.8,7.2 Z" fill="none" stroke="#8a6e5a" stroke-width="1.1"/></svg>
<div class="t" style="transform:scaleX(0.812);left:38px;top:87.5px;color:#2a3a5a">RIGHT</div>
<div class="abs" style="left:19px;top:83px;width:47px;height:17.5px;border:2px solid #f00f1e;border-radius:1px"></div>

<svg class="abs" style="left:21px;top:104.5px" width="13" height="8" viewBox="0 0 13 8"><path d="M3,0.8 L12,0.8 L9.6,7.2 L0.8,7.2 Z" fill="none" stroke="#8a6e5a" stroke-width="1.1"/></svg>
<div class="t" style="transform:scaleX(0.801);left:38px;top:103px">TOP</div>
<svg class="abs" style="left:21px;top:120px" width="13" height="8" viewBox="0 0 13 8"><path d="M3,0.8 L12,0.8 L9.6,7.2 L0.8,7.2 Z" fill="none" stroke="#8a6e5a" stroke-width="1.1"/></svg>
<div class="t" style="transform:scaleX(0.816);left:38px;top:118.5px">FRONT</div>
<svg class="abs" style="left:20px;top:133px" width="15" height="14" viewBox="0 0 15 14">
  <path d="M5.5,1 L5.5,9 L13.5,9 M5.5,9 L1.5,12.5" fill="none" stroke="#7a4a3a" stroke-width="1.1"/>
  <circle cx="13.3" cy="9" r="0.9" fill="#7a4a3a"/><circle cx="1.7" cy="12.4" r="0.9" fill="#7a4a3a"/><circle cx="5.5" cy="1.2" r="0.9" fill="#7a4a3a"/>
</svg>
<div class="t" style="transform:scaleX(0.747);left:38px;top:134px">PRT_CSYS_DEF</div>

<div class="ar" style="left:10.5px;top:153.5px"></div>
<svg class="abs" style="left:20.5px;top:149px" width="14" height="14" viewBox="0 0 14 14" opacity="0.55">
  <rect x="0.5" y="0.5" width="13" height="13" fill="#eeeae6"/>
  <ellipse cx="4.5" cy="8" rx="3" ry="2.2" fill="none" stroke="#b0927a" stroke-width="0.9"/><ellipse cx="9.5" cy="8" rx="3" ry="2.2" fill="none" stroke="#b0927a" stroke-width="0.9"/>
  <path d="M7,2 L7,13" stroke="#b0a8a0" stroke-width="0.7" stroke-dasharray="2 1"/><path d="M2.5,5.5 Q7,1.5 11.5,5.5" fill="none" stroke="#b0927a" stroke-width="0.8"/>
</svg>
<div class="t" style="transform:scaleX(0.864);left:38px;top:150px;color:#b4b8bc">Revolve 1</div>

<div class="ar" style="left:10.5px;top:169px"></div>
<svg class="abs" style="left:20.5px;top:164px" width="15" height="15" viewBox="0 0 15 15">
  <path d="M6.5,0.5 L6.5,14" stroke="#8a8e92" stroke-width="0.7" stroke-dasharray="3 1.2"/>
  <ellipse cx="4" cy="8.5" rx="2.8" ry="2.2" fill="#fff" stroke="#8a8e92" stroke-width="0.9"/>
  <ellipse cx="10" cy="8.5" rx="3" ry="2.4" fill="#8ecbe8" stroke="#3a86b4" stroke-width="1"/>
</svg>
<div class="t" style="transform:scaleX(0.876);left:38px;top:165.5px">Revolve 2</div>

<div class="ar" style="left:10.5px;top:184.5px"></div>
<svg class="abs" style="left:20.5px;top:181px" width="14" height="12" viewBox="0 0 14 12">
  <g fill="none" stroke="#3a86b4" stroke-width="0.9">
    <ellipse cx="4" cy="5.5" rx="1.8" ry="3.6"/><ellipse cx="7.3" cy="5.5" rx="1.8" ry="3.6"/><ellipse cx="10.6" cy="5.5" rx="1.8" ry="3.6"/>
    <path d="M1,10.5 L13,10.5" stroke="#7cc4e4"/>
  </g>
</svg>
<div class="t" style="transform:scaleX(0.903);left:38px;top:181px">Helical Sweep 1</div>

<svg class="abs" style="left:20px;top:195px" width="15" height="15" viewBox="0 0 15 15">
  <rect x="6" y="1.5" width="7.5" height="7" fill="#f5f8f9" stroke="#5a9ab8" stroke-width="0.9"/>
  <circle cx="6.2" cy="8.6" r="5" fill="none" stroke="#4a8eae" stroke-width="1"/>
  <path d="M6,3.5 L6,8.5 L11,8.5" fill="none" stroke="#9ac4d8" stroke-width="0.7"/>
</svg>
<div class="t" style="transform:scaleX(0.904);left:38px;top:196.5px">Merge 1</div>

<div class="abs" style="left:3px;top:215px;width:226px;height:2px;background:#5cc44a"></div>

<svg class="abs" style="left:20.5px;top:222.5px" width="14" height="14" viewBox="0 0 14 14">
  <path d="M1,5.5 L5,1 L12.5,1 L12.5,8 L8.5,12.8 L1,12.8 Z" fill="#c6e6f6" stroke="#9aa6ae" stroke-width="0.5"/>
  <path d="M8.5,5.5 L12.5,1 L12.5,8 L8.5,12.8 Z" fill="#4aa4d2"/>
  <path d="M5.5,1.2 L12.3,1.2 L8.5,5.5 L6,5.5 Z" fill="#6ab6de"/>
  <rect x="1" y="5.5" width="7.5" height="7.3" fill="#f7f8f8" stroke="#a8b0b6" stroke-width="0.5"/>
</svg>
<svg class="abs" style="left:37px;top:225px" width="7" height="7" viewBox="0 0 7 7">
  <path d="M3.5,0 L4.3,2 L6.5,0.8 L5.2,2.9 L7,3.5 L5.2,4.2 L6.3,6.3 L4.3,5.1 L3.5,7 L2.7,5.1 L0.7,6.3 L1.8,4.2 L0,3.5 L1.8,2.9 L0.6,0.8 L2.7,2 Z" fill="#e8e010" stroke="#a8a800" stroke-width="0.3"/>
</svg>
<div class="t" style="transform:scaleX(0.897);left:44.75px;top:223.5px">Extrude 1</div>

</div>
<div id="leftborder"></div>

<style>
#tb{position:absolute;left:739.3px;top:110px;width:252.5px;height:25px;background:#f4f6f8;border:1px solid #bcc0c4}
#dlg{position:absolute;left:742px;top:142px;width:282px;height:259.5px;background:#eff1f3}
#dlg .t{position:absolute;white-space:nowrap;line-height:12px;font-size:10px;color:#3a3a3a;transform-origin:0 50%}
#dlg .t.c{transform-origin:50% 50%}
#dlg .btn{position:absolute;background:#fafbfc;border:1px solid #b4b8bc}
</style>
<div id="tb">
<svg width="252" height="24" viewBox="0 0 252 24" style="position:absolute;left:-1.3px;top:0">
  <!-- 1 refit -->
  <g transform="translate(12.4,12.3)">
    <rect x="-6" y="-6" width="11" height="11" fill="#fff" stroke="#8a8e92" stroke-width="0.9"/>
    <circle cx="-0.8" cy="-0.8" r="3.3" fill="#dff0fa" stroke="#6a8eaa" stroke-width="1"/>
    <path d="M1.8,1.8 L6,6" stroke="#7a7e82" stroke-width="1.6"/>
  </g>
  <!-- 2 zoom in -->
  <g transform="translate(32.2,12.3)">
    <circle cx="-1.2" cy="-1.5" r="4.2" fill="#e6f4fc" stroke="#4a86b4" stroke-width="1.1"/>
    <path d="M-1.2,-3.8 L-1.2,0.8 M-3.5,-1.5 L1.1,-1.5" stroke="#2a6a9a" stroke-width="1.3"/>
    <path d="M2,1.8 L6,6" stroke="#7a7e82" stroke-width="1.7"/>
  </g>
  <!-- 3 zoom out -->
  <g transform="translate(52.6,12.3)">
    <circle cx="-1.2" cy="-1.5" r="4.2" fill="#e6f4fc" stroke="#4a86b4" stroke-width="1.1"/>
    <path d="M-3.5,-1.5 L1.1,-1.5" stroke="#2a6a9a" stroke-width="1.3"/>
    <path d="M2,1.8 L6,6" stroke="#7a7e82" stroke-width="1.7"/>
  </g>
  <!-- 4 repaint -->
  <g transform="translate(73.3,12.3)">
    <rect x="-5.5" y="-5.5" width="11" height="11" fill="#fafbfc" stroke="#8a8e92" stroke-width="0.9"/>
    <path d="M5,-5 L5,5 L-5,5 Z" fill="#3a8ac0"/>
    <path d="M5,-5 L-5,5" stroke="#bfe0f4" stroke-width="1.2"/>
  </g>
  <!-- 5 display style -->
  <g transform="translate(94.5,12.3)">
    <path d="M-6.5,3 Q-4,-1 0,0.5 Q3,1 4.5,-5.5 L7,-4.5 Q6,3 1,5.5 Q-3,7.5 -6.5,3 Z" fill="#7a7e82"/>
    <path d="M-4.5,3 Q-2,1.5 0.5,2.5 Q3.5,3 5,-2" stroke="#d4d7da" stroke-width="1.8" fill="none"/>
    <path d="M6,6.8 L8,6.8 L8,4.8 Z" fill="#333"/>
  </g>
  <!-- 6 cube -->
  <g transform="translate(115.2,12.3)">
    <path d="M-6,-2.5 L-2.5,-6 L6,-6 L6,3 L2.5,6.5 L-6,6.5 Z" fill="#fff" stroke="#2c5a86" stroke-width="1.1"/>
    <path d="M2.5,-2.5 L6,-6 L6,3 L2.5,6.5 Z" fill="#5aa6d6"/>
    <path d="M-6,-2.5 L2.5,-2.5 L2.5,6.5 M2.5,-2.5 L6,-6" fill="none" stroke="#2c5a86" stroke-width="1"/>
    <path d="M6.5,7 L8.5,7 L8.5,5 Z" fill="#333"/>
  </g>
  <!-- 7 saved views -->
  <g transform="translate(136.5,12.3)">
    <rect x="-6" y="-5.5" width="10" height="9" fill="#fff" stroke="#7ab0d0" stroke-width="0.9"/>
    <rect x="0" y="-1" width="5.5" height="7.5" fill="#e4e6e8" stroke="#9a9ea2" stroke-width="0.7"/>
    <path d="M1.2,1 L4.3,1 M1.2,3 L4.3,3 M1.2,5 L4.3,5" stroke="#9a9ea2" stroke-width="0.6"/>
    <path d="M6.5,7 L8.5,7 L8.5,5 Z" fill="#333"/>
  </g>
  <!-- 8 camera list -->
  <g transform="translate(157.4,12.3)">
    <rect x="-6" y="-6" width="9" height="11" fill="#e8eaec" stroke="#8a8e92" stroke-width="0.8"/>
    <path d="M-4,-3.5 L1,-3.5 M-4,-1 L1,-1 M-4,1.5 L1,1.5" stroke="#8a8e92" stroke-width="0.7"/>
    <rect x="-1" y="0.5" width="8" height="6" rx="0.8" fill="#3a3e42"/>
    <circle cx="3" cy="3.6" r="1.5" fill="#c4c8cb"/>
  </g>
  <!-- 9 perspective cube -->
  <g transform="translate(177.5,12.3)">
    <path d="M-6,-3 L1,-6 L6.5,-4 L6.5,3 L0,6.5 L-6,3.5 Z" fill="#bfe4f6" stroke="#3a86b4" stroke-width="0.9"/>
    <path d="M-6,-3 L0,-0.5 L6.5,-4 M0,-0.5 L0,6.5" fill="none" stroke="#3a86b4" stroke-width="0.8"/>
    <path d="M-3,-1 L-3,4.5 M3,-2 L3,4.8" stroke="#7cc0e0" stroke-width="0.7"/>
  </g>
  <!-- 10 datum display -->
  <g transform="translate(198.5,12.3)">
    <path d="M-5,5.5 L0,-6 M-1,6 L4,-3" stroke="#8a5a2a" stroke-width="1" stroke-dasharray="2.2 1.2"/>
    <path d="M-6,-5.5 L-3,-2.5 M-3,-5.5 L-6,-2.5" stroke="#5a3a1a" stroke-width="1"/>
    <path d="M2,2 L6,2 M4,0 L4,4" stroke="#8a5a2a" stroke-width="0.9"/>
    <path d="M6.5,7 L8.5,7 L8.5,5 Z" fill="#333"/>
  </g>
  <!-- 11 annotation display -->
  <g transform="translate(219,12.3)">
    <rect x="-6.5" y="-5.5" width="8" height="4.5" fill="#fdf6e0" stroke="#8a8e92" stroke-width="0.8"/>
    <path d="M1.5,-3.2 L5,-3.2 L5,2" stroke="#6a6e72" stroke-width="0.8" fill="none"/>
    <path d="M3,-0.5 L7,-0.5 M3,1.5 L7,1.5" stroke="#3a3e42" stroke-width="0.9"/>
    <ellipse cx="4.5" cy="5" rx="3.2" ry="1.6" fill="#3a3e42"/>
  </g>
  <!-- 12 spin center -->
  <g transform="translate(239,12.3)">
    <path d="M-4,-5 L0,0 L-4,5 M0,0 L6,-0.5" stroke="#3a7a4a" stroke-width="1.2" fill="none"/>
    <circle cx="-4" cy="-5" r="1.6" fill="#3aa04a"/><circle cx="-4" cy="5" r="1.6" fill="#3a86d4"/><circle cx="6" cy="-0.5" r="1.8" fill="#e03a3a"/>
  </g>
</svg>
</div>

<div id="dlg">
  <div class="abs" style="left:0;top:0.4px;width:279.7px;height:26px;background:#e4e6e8"></div>
  <div class="t c" style="transform:translateX(-50%) scaleX(0.954);left:140.4px;top:8px;font-size:12px;color:#9a9ea2">Sketch</div>
  <svg class="abs" style="left:265px;top:11px" width="8" height="8" viewBox="0 0 8 8"><path d="M1,1 L7,7 M7,1 L1,7" stroke="#6a6e72" stroke-width="1.3"/></svg>

  <!-- panel -->
  <div class="abs" style="left:9px;top:60px;width:263px;height:138.5px;background:#f9fafb;border:1px solid #d2d5d8"></div>
  <div class="abs" style="left:9px;top:42.5px;width:59.5px;height:19px;background:#f9fafb;border:1px solid #d2d5d8;border-bottom:none;border-radius:2px 2px 0 0"></div>
  <div class="t" style="transform:scaleX(0.921);left:17px;top:46.5px">Placement</div>

  <div class="t" style="transform:scaleX(0.889);left:21.2px;top:69.5px">Sketch Plane</div>
  <div class="abs" style="left:78.5px;top:75px;width:184px;height:1px;background:#d6d9dc"></div>
  <div class="t" style="transform:scaleX(0.887);left:28.25px;top:91.5px">Plane</div>
  <div class="abs" style="left:55.5px;top:88.5px;width:129.5px;height:16.5px;background:#f8f9fa;border:1px solid #c9cdd0"></div>
  <div class="t" style="transform:scaleX(0.885);left:68.5px;top:91.5px;color:#a2a6aa">FRONT:F3(DATUM PLANE)</div>
  <div class="btn" style="left:188px;top:88.5px;width:67.5px;height:17.5px"></div>
  <div class="t" style="transform:scaleX(0.869);left:196px;top:91.5px;color:#2a2a2a">Use Previous</div>

  <div class="t" style="transform:scaleX(0.926);left:21.2px;top:114.5px">Sketch Orientation</div>
  <div class="abs" style="left:102.5px;top:120px;width:160px;height:1px;background:#d6d9dc"></div>
  <div class="t" style="transform:scaleX(0.922);left:28px;top:137px">Sketch view direction</div>
  <div class="btn" style="left:120px;top:134.5px;width:30px;height:17px"></div>
  <div class="t" style="transform:scaleX(0.868);left:128px;top:137px;color:#2a2a2a">Flip</div>

  <div class="t" style="transform:scaleX(0.858);left:29.7px;top:162px">Reference</div>
  <div class="abs" style="left:79px;top:159.5px;width:176.5px;height:16.5px;background:#e8f9d8;border:1px solid #c6d6be"></div>
  <div class="t" style="transform:scaleX(0.886);left:91.7px;top:162px;color:#222">RIGHT:F1(DATUM PLANE)</div>

  <div class="t" style="transform:scaleX(0.940);left:28px;top:183px">Orientation</div>
  <div class="btn" style="left:79px;top:180.5px;width:54px;height:17px"></div>
  <div class="abs" style="left:120.5px;top:181.5px;width:1px;height:15px;background:#c4c8cb"></div>
  <div class="t" style="transform:scaleX(0.963);left:85.5px;top:183px;color:#2a2a2a">Bottom</div>
  <div class="abs" style="left:124px;top:187.5px;width:0;height:0;border-left:3px solid transparent;border-right:3px solid transparent;border-top:3.5px solid #444"></div>

  <div class="abs" style="left:1px;top:210.5px;width:271px;height:1px;background:#d2d5d8"></div>
  <div class="abs" style="left:170.5px;top:225.8px;width:48.2px;height:18.5px;background:#a6dcf8"></div>
  <div class="t c" style="transform:translateX(-50%) scaleX(0.883);left:194.5px;top:229.5px;color:#2a2a2a">Sketch</div>
  <div class="btn" style="left:224.8px;top:225.8px;width:47px;height:18.5px"></div>
  <div class="t c" style="transform:translateX(-50%) scaleX(0.899);left:248.3px;top:229.5px;color:#2a2a2a">Cancel</div>
</div>

</body>
</html>
